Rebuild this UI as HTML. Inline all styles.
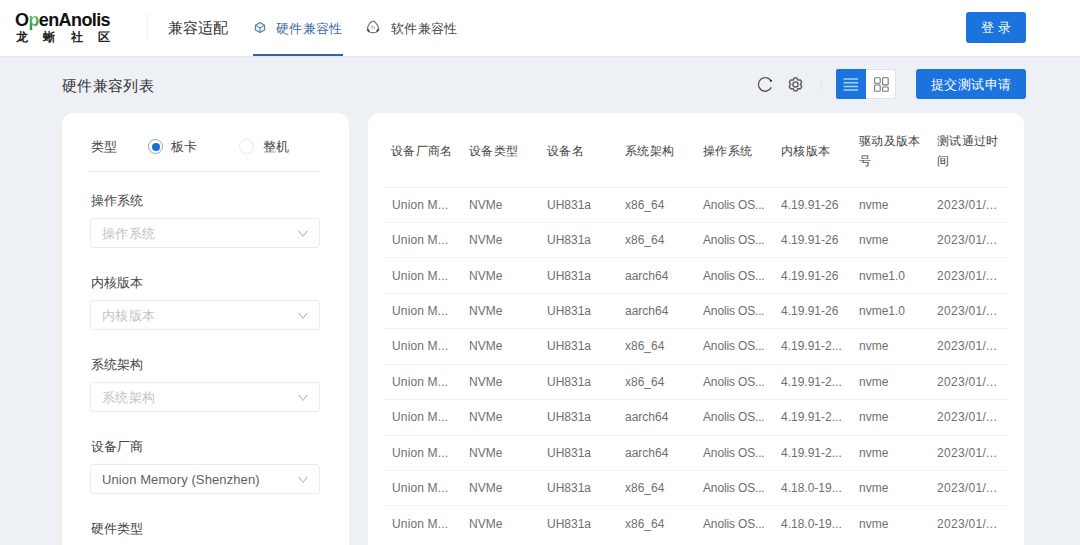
<!DOCTYPE html>
<html><head><meta charset="utf-8">
<style>
*{box-sizing:border-box;margin:0;padding:0}
html,body{width:1080px;height:545px;overflow:hidden}
body{background:#edf0f4;font-family:"Liberation Sans",sans-serif;color:#333;position:relative}
.abs{position:absolute}
#hdr{position:absolute;left:0;top:0;width:1080px;height:56px;background:#fff;box-shadow:0 1px 0 #e6e8eb}
.logo{position:absolute;left:15px;top:9.5px;font-weight:bold;font-size:18px;letter-spacing:-0.6px;color:#111;line-height:20px}
.logo .p{background:linear-gradient(180deg,#a6d33a 0%,#5cb85c 45%,#2f8f4f 100%);-webkit-background-clip:text;background-clip:text;color:transparent}
.logo2{position:absolute;left:16px;top:31px;font-size:12px;color:#222;line-height:13px;width:94px;display:flex;justify-content:space-between;font-weight:bold}
.vdiv{position:absolute;left:147px;top:13px;width:1px;height:28px;background:#f3f3f3}
.nav1{position:absolute;left:168px;top:18.5px;font-size:15px;line-height:18px;color:#333}
.tab{position:absolute;top:21px;font-size:13px;letter-spacing:0.35px;line-height:16px}
.tab1{left:276px;color:#3d6aa6}
.tab2{left:391px;color:#444}
.uline{position:absolute;left:253px;top:54px;width:90px;height:2px;background:#3462a3}
.btn{position:absolute;background:#1b73de;color:#fff;border-radius:3px;font-size:14px;text-align:center}
#login{left:966px;top:12px;width:60px;height:31px;line-height:32px;font-size:13px;letter-spacing:4px;padding-left:4px}
.title{position:absolute;left:62px;top:76.5px;font-size:15px;letter-spacing:0.35px;line-height:18px;color:#333}
#submit{left:916px;top:68.6px;width:110px;height:30.3px;line-height:32px;font-size:13px;letter-spacing:0.5px;padding-left:0.5px}
.seg{position:absolute;top:69px;height:30px;width:30px}
.card{position:absolute;top:113px;background:#fff;border-radius:12px}
#lcard{left:62px;width:287px;height:460px}
#rcard{left:368px;width:656px;height:460px}
.lbl{position:absolute;left:90.5px;font-size:13px;letter-spacing:0.3px;line-height:16px;color:#444}
.sel{position:absolute;left:90px;width:230px;height:30px;border:1px solid #e9ebef;border-radius:3px}
.sel span{position:absolute;left:11px;top:7px;font-size:13px;letter-spacing:0.45px;line-height:16px;color:#c2c4c8}
.sel svg{position:absolute;right:10px;top:10.5px;transform:scale(0.85,1)}
.radio{position:absolute;top:139px;width:15px;height:15px;border-radius:50%;border:1px solid #c8ccd4}
table{position:absolute;left:384px;top:113px;border-collapse:collapse;table-layout:fixed;width:624px}
td,th{width:78px;padding:0 6px 0 7px;text-align:left;font-weight:normal;font-size:12px;white-space:nowrap;overflow:visible}
th{height:74px;color:#444;line-height:19.8px;padding-top:5px;font-size:12px!important;letter-spacing:0.37px;white-space:normal;vertical-align:middle}
td{height:35.45px;color:#6f6f6f;padding-left:7px;border-top:1px solid #efefef}
</style></head><body>
<div id="hdr">
  <div class="logo">O<span class="p">p</span>enAnolis</div>
  <div class="logo2"><span>龙</span><span>蜥</span><span>社</span><span>区</span></div>
  <div class="vdiv"></div>
  <div class="nav1">兼容适配</div>
  <div class="tab tab1">硬件兼容性</div>
  <div class="tab tab2">软件兼容性</div>
  <div class="uline"></div>
  <div id="login" class="btn">登录</div>
</div>
<div class="title">硬件兼容列表</div>
<div id="submit" class="btn">提交测试申请</div>
<div class="seg" style="left:836px;background:#1b73de;border-radius:2px 0 0 2px"></div>
<div class="seg" style="left:866px;background:#fff;border:1px solid #e2e4e8;border-left:none;border-radius:0 2px 2px 0"></div>


<svg class="abs" style="left:252px;top:19px" width="16" height="16" viewBox="0 0 16 16"><path d="M8 3.6 L12.6 6.2 V11 L8 13.6 L3.4 11 V6.2 Z" fill="#e6f4fb" stroke="#5f7f95" stroke-width="1.1" stroke-linejoin="round"/><path d="M3.7 6.4 L8 8.8 L12.3 6.4 M8 8.8 V13.4" fill="none" stroke="#5f7f95" stroke-width="1"/></svg>
<svg class="abs" style="left:365px;top:18px" width="16" height="16" viewBox="0 0 16 16"><path d="M8 3.1 C10.6 3.1 13.6 8.6 13.6 10.9 C13.6 13.1 11.2 14.7 8 14.7 C4.8 14.7 2.4 13.1 2.4 10.9 C2.4 8.6 5.4 3.1 8 3.1 Z" fill="none" stroke="#7a7a7a" stroke-width="1.2"/><path d="M6.2 8.4 H8.6 M7.6 8.4 L7 11 M9.6 8.6 V11.2" fill="none" stroke="#9a9a9a" stroke-width="0.8"/><path d="M2.6 11 Q3 13 4.6 13.6 M13.4 11 Q13 13 11.4 13.6" fill="none" stroke="#4a4a4a" stroke-width="1.8"/></svg>
<svg class="abs" style="left:756px;top:76px" width="18" height="18" viewBox="0 0 18 18"><path d="M14.97 4.80 A6.8 6.8 0 1 0 15.31 11.38" fill="none" stroke="#5a5a5a" stroke-width="1.4"/><circle cx="14.97" cy="4.80" r="1.1" fill="#333"/></svg>
<svg class="abs" style="left:786px;top:76px" width="19" height="18" viewBox="0 0 19 18"><path d="M8.24 1.92 L10.76 1.92 L11.95 4.16 L14.48 4.07 L15.74 6.25 L14.40 8.40 L15.74 10.55 L14.48 12.73 L11.95 12.64 L10.76 14.88 L8.24 14.88 L7.05 12.64 L4.52 12.73 L3.26 10.55 L4.60 8.40 L3.26 6.25 L4.52 4.07 L7.05 4.16 Z" fill="none" stroke="#5a5a5a" stroke-width="1.4" stroke-linejoin="round"/><circle cx="9.5" cy="8.4" r="2.6" fill="none" stroke="#5a5a5a" stroke-width="1.3"/></svg>
<div class="abs" style="left:821px;top:80px;width:1px;height:12px;background:#e3e5ea"></div>
<svg class="abs" style="left:836px;top:69px" width="30" height="30" viewBox="0 0 30 30"><path d="M7.5 10.1 H22.1 M7.5 13.8 H22.1 M7.5 17.6 H22.1 M7.5 21.1 H22.1" stroke="#a6d1ff" stroke-width="1.5"/></svg>
<svg class="abs" style="left:866px;top:69px" width="30" height="30" viewBox="0 0 30 30"><g fill="none" stroke="#777" stroke-width="1.1"><rect x="8.6" y="8.7" width="5.6" height="5.6" rx="0.8"/><rect x="8.6" y="16" width="5.6" height="6.2" rx="0.8"/><rect x="16.6" y="8.7" width="5.6" height="7.2" rx="0.8"/><rect x="16.6" y="18" width="5.6" height="4.2" rx="0.8"/></g></svg>

<div id="lcard" class="card"></div>
<div id="rcard" class="card"></div>

<div class="lbl" style="top:139px">类型</div>
<div class="radio" style="left:148px;border-color:#8ea6c2"><div style="position:absolute;left:2.5px;top:2.5px;width:8px;height:8px;border-radius:50%;background:#1b6ed6"></div></div>
<div class="lbl" style="left:171px;top:139px">板卡</div>
<div class="radio" style="left:239px;border-color:#e4e6ea"></div>
<div class="lbl" style="left:263px;top:139px">整机</div>
<div class="abs" style="left:88px;top:171px;width:232px;height:1px;background:#ececec"></div>

<div class="lbl" style="top:193px">操作系统</div>
<div class="sel" style="top:218px"><span>操作系统</span><svg width="12" height="8" viewBox="0 0 12 8"><path d="M1 1 L6 6.3 L11 1" fill="none" stroke="#b4b8c0" stroke-width="1.1"/></svg></div>
<div class="lbl" style="top:275px">内核版本</div>
<div class="sel" style="top:300px"><span>内核版本</span><svg width="12" height="8" viewBox="0 0 12 8"><path d="M1 1 L6 6.3 L11 1" fill="none" stroke="#b4b8c0" stroke-width="1.1"/></svg></div>
<div class="lbl" style="top:357px">系统架构</div>
<div class="sel" style="top:382px"><span>系统架构</span><svg width="12" height="8" viewBox="0 0 12 8"><path d="M1 1 L6 6.3 L11 1" fill="none" stroke="#b4b8c0" stroke-width="1.1"/></svg></div>
<div class="lbl" style="top:439px">设备厂商</div>
<div class="sel" style="top:464px"><span style="color:#626262;letter-spacing:0.1px">Union Memory (Shenzhen)</span><svg width="12" height="8" viewBox="0 0 12 8"><path d="M1 1 L6 6.3 L11 1" fill="none" stroke="#b4b8c0" stroke-width="1.1"/></svg></div>
<div class="lbl" style="top:521px">硬件类型</div>

<table>
<tr><th>设备厂商名</th><th>设备类型</th><th>设备名</th><th>系统架构</th><th>操作系统</th><th>内核版本</th><th>驱动及版本<br>号</th><th>测试通过时<br>间</th></tr>
<tr><td style="letter-spacing:0.15px;padding-left:8px">Union M...</td><td>NVMe</td><td>UH831a</td><td>x86_64</td><td style="letter-spacing:-0.15px">Anolis OS...</td><td>4.19.91-26</td><td>nvme</td><td style="letter-spacing:0.3px">2023/01/...</td></tr>
<tr><td style="letter-spacing:0.15px;padding-left:8px">Union M...</td><td>NVMe</td><td>UH831a</td><td>x86_64</td><td style="letter-spacing:-0.15px">Anolis OS...</td><td>4.19.91-26</td><td>nvme</td><td style="letter-spacing:0.3px">2023/01/...</td></tr>
<tr><td style="letter-spacing:0.15px;padding-left:8px">Union M...</td><td>NVMe</td><td>UH831a</td><td>aarch64</td><td style="letter-spacing:-0.15px">Anolis OS...</td><td>4.19.91-26</td><td>nvme1.0</td><td style="letter-spacing:0.3px">2023/01/...</td></tr>
<tr><td style="letter-spacing:0.15px;padding-left:8px">Union M...</td><td>NVMe</td><td>UH831a</td><td>aarch64</td><td style="letter-spacing:-0.15px">Anolis OS...</td><td>4.19.91-26</td><td>nvme1.0</td><td style="letter-spacing:0.3px">2023/01/...</td></tr>
<tr><td style="letter-spacing:0.15px;padding-left:8px">Union M...</td><td>NVMe</td><td>UH831a</td><td>x86_64</td><td style="letter-spacing:-0.15px">Anolis OS...</td><td>4.19.91-2...</td><td>nvme</td><td style="letter-spacing:0.3px">2023/01/...</td></tr>
<tr><td style="letter-spacing:0.15px;padding-left:8px">Union M...</td><td>NVMe</td><td>UH831a</td><td>x86_64</td><td style="letter-spacing:-0.15px">Anolis OS...</td><td>4.19.91-2...</td><td>nvme</td><td style="letter-spacing:0.3px">2023/01/...</td></tr>
<tr><td style="letter-spacing:0.15px;padding-left:8px">Union M...</td><td>NVMe</td><td>UH831a</td><td>aarch64</td><td style="letter-spacing:-0.15px">Anolis OS...</td><td>4.19.91-2...</td><td>nvme</td><td style="letter-spacing:0.3px">2023/01/...</td></tr>
<tr><td style="letter-spacing:0.15px;padding-left:8px">Union M...</td><td>NVMe</td><td>UH831a</td><td>aarch64</td><td style="letter-spacing:-0.15px">Anolis OS...</td><td>4.19.91-2...</td><td>nvme</td><td style="letter-spacing:0.3px">2023/01/...</td></tr>
<tr><td style="letter-spacing:0.15px;padding-left:8px">Union M...</td><td>NVMe</td><td>UH831a</td><td>x86_64</td><td style="letter-spacing:-0.15px">Anolis OS...</td><td>4.18.0-19...</td><td>nvme</td><td style="letter-spacing:0.3px">2023/01/...</td></tr>
<tr><td style="letter-spacing:0.15px;padding-left:8px">Union M...</td><td>NVMe</td><td>UH831a</td><td>x86_64</td><td style="letter-spacing:-0.15px">Anolis OS...</td><td>4.18.0-19...</td><td>nvme</td><td style="letter-spacing:0.3px">2023/01/...</td></tr>
</table>
</body></html>
